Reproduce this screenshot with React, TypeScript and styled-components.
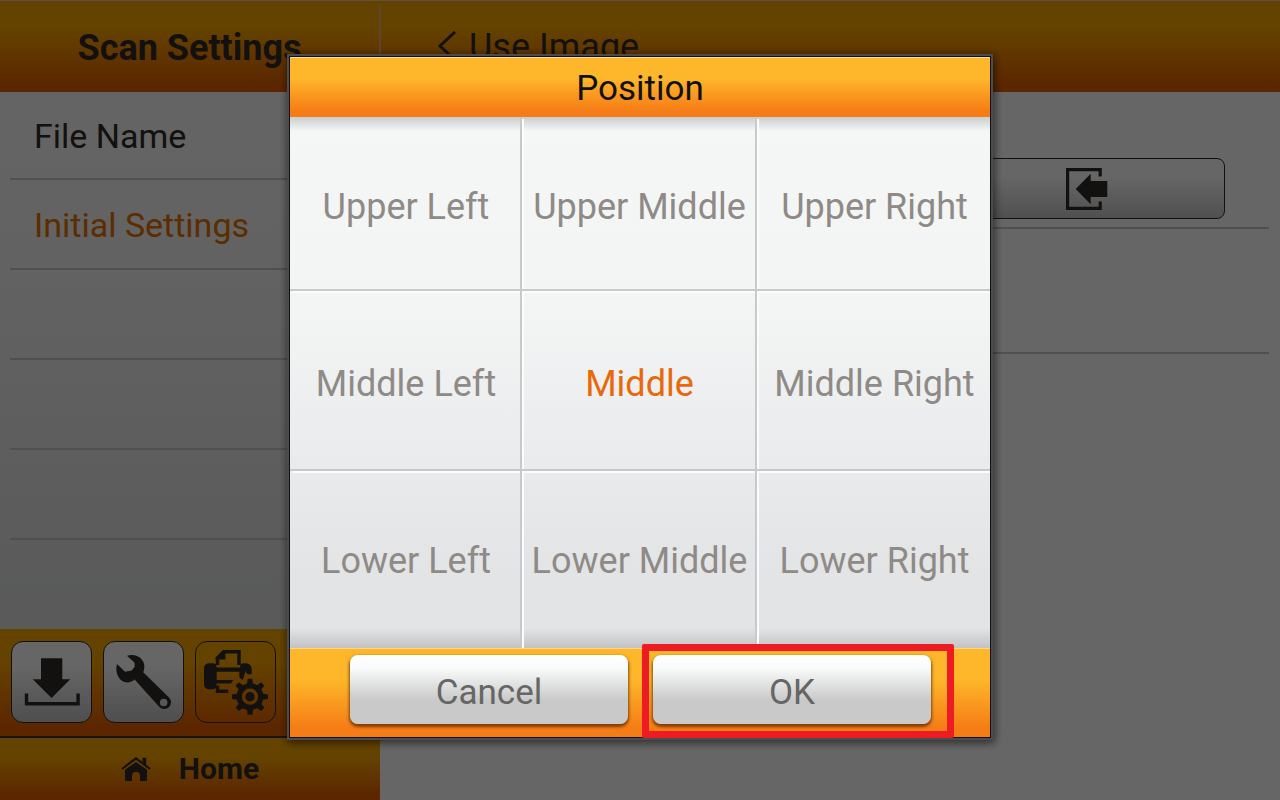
import React, { useState } from "react";
import styled, { createGlobalStyle } from "styled-components";

const GlobalStyle = createGlobalStyle`
  *, *::before, *::after { box-sizing: border-box; }
  body {
    margin: 0;
    background: #fff;
    color: #302c28;
    font-family: Roboto, "Liberation Sans", sans-serif;
  }
  button { font: inherit; color: inherit; margin: 0; }
`;

const barGradient = "linear-gradient(#fba600 0%, #fba600 30%, #e66000 92%, #e66000 100%)";
const brightGradient = "linear-gradient(#feb62a 0%, #feb62a 35%, #f57c16 90%, #f57c16 100%)";

const Page = styled.div`
  display: flex;
  flex-direction: column;
  min-height: 100vh;
`;

const Header = styled.header`
  display: flex;
  height: 92px;
  padding-top: 3px;
  border-top: 1px solid #e6cba0;
  background: ${barGradient};
`;

const ScreenTitle = styled.h1`
  flex: 0 0 381px;
  margin: 0;
  border-right: 2px solid #e6b080;
  font-size: 36px;
  font-weight: 700;
  line-height: 88px;
  text-align: center;
`;

const BackButton = styled.button`
  display: flex;
  align-items: center;
  gap: 12px;
  padding: 0 0 2px 56px;
  border: 0;
  background: none;
  font-size: 36px;
`;

const Body = styled.div`
  display: flex;
  flex: 1;
`;

const Sidebar = styled.nav`
  display: flex;
  flex: 0 0 380px;
  flex-direction: column;
`;

const MenuList = styled.ul`
  flex: 1;
  margin: 0;
  padding: 0;
  list-style: none;
  background: linear-gradient(#fbfbfb 0%, #f6f6f6 30%, #dfe0e0 100%);
`;

const MenuItem = styled.li<{ $first?: boolean }>`
  height: ${(p) => (p.$first ? 88 : 90)}px;
  margin-left: 10px;
  border-bottom: 2px solid #c8c8c8;
  &:last-child { border-bottom: 0; height: 89px; }
`;

const MenuButton = styled.button<{ $active?: boolean }>`
  display: block;
  width: 100%;
  height: 100%;
  padding: 2px 24px 0;
  border: 0;
  background: none;
  color: ${(p) => (p.$active ? "#e47100" : "#302c28")};
  font-size: 34px;
  text-align: left;
`;

const Toolbar = styled.div`
  display: flex;
  gap: 11px;
  height: 109px;
  padding: 12px 11px;
  border-bottom: 2px solid #47301c;
  background: ${barGradient};
`;

const ToolButton = styled.button<{ $selected?: boolean }>`
  width: 81px;
  height: 82px;
  padding: 0;
  border: 1px solid #302c28;
  border-radius: 12px;
  background: ${(p) =>
    p.$selected ? "transparent" : "linear-gradient(#fff 0%, #fff 30%, #c4c4c4 100%)"};
  svg { display: block; }
`;

const HomeButton = styled.button`
  display: flex;
  align-items: center;
  justify-content: center;
  gap: 28px;
  height: 62px;
  padding: 0 0 2px;
  border: 0;
  border-top: 1px solid #d8a860;
  background: ${barGradient};
  font-size: 30px;
  font-weight: 700;
`;

const Content = styled.main`
  flex: 1;
  padding: 1px 11px 0 10px;
`;

const SettingRow = styled.div<{ $height: number }>`
  display: flex;
  align-items: flex-end;
  justify-content: flex-end;
  height: ${(p) => p.$height}px;
  padding: 0 44px 8px;
  border-bottom: 2px solid #c8c8c8;
`;

const ImportButton = styled.button`
  display: grid;
  place-items: center;
  width: 276px;
  height: 61px;
  padding: 0;
  border: 1px solid #302c28;
  border-radius: 8px;
  background: linear-gradient(#fff 0%, #fff 30%, #c8c8c8 100%);
`;

const Backdrop = styled.div`
  position: fixed;
  inset: 0;
  display: flex;
  align-items: center;
  justify-content: center;
  padding-bottom: 6px;
  background: rgba(0, 0, 0, 0.6);
`;

const Dialog = styled.section`
  width: 702px;
  max-width: 100%;
  border: 1px solid #111;
  outline: 2px solid #4c4c4c;
  box-shadow: 1px 2px 8px 3px rgba(0, 0, 0, 0.55);
`;

const DialogTitle = styled.h2`
  margin: 0;
  padding-top: 2px;
  border-top: 1px solid #ffd9a0;
  background: ${brightGradient};
  color: #111;
  font-size: 35px;
  font-weight: 400;
  line-height: 57px;
  text-align: center;
`;

const PositionGrid = styled.div`
  display: grid;
  grid-template-columns: 232fr 235fr 233fr;
  grid-template-rows: 174px 180px 177px;
  background:
    linear-gradient(rgba(90, 90, 100, 0.28), rgba(90, 90, 100, 0)) top / 100% 14px no-repeat,
    linear-gradient(rgba(120, 120, 120, 0), rgba(120, 120, 120, 0.3)) bottom / 100% 20px no-repeat,
    linear-gradient(#f5f7f7 0%, #f3f5f5 35%, #e3e4e6 85%, #e3e4e6 100%);
`;

const PositionCell = styled.button<{ $selected: boolean }>`
  padding: 8px 0 0 2px;
  border: solid #c8c9c9;
  border-width: 0 2px 2px 0;
  box-shadow: 2px 2px 0 #fbfcfc;
  background: none;
  color: ${(p) => (p.$selected ? "#e8690b" : "#8f8a86")};
  font-size: 36px;
  white-space: nowrap;
  &:nth-child(3n) { border-right: 0; box-shadow: 0 2px 0 #fbfcfc; }
  &:nth-child(n + 7) { padding-top: 2px; border-bottom: 0; box-shadow: 2px 0 0 #fbfcfc; }
  &:last-child { box-shadow: none; }
`;

const DialogFooter = styled.div`
  display: flex;
  gap: 25px;
  height: 89px;
  padding: 6px 59px 13px 60px;
  border-top: 1px solid #ffd48a;
  background: ${brightGradient};
`;

const ActionSlot = styled.div`
  position: relative;
  display: flex;
  flex: 1;
`;

const ActionButton = styled.button`
  flex: 1;
  padding: 6px 0 0;
  border: 0;
  border-radius: 8px;
  background: linear-gradient(#fff 0%, #fafbfb 18%, #c9c9c9 66%, #c9c9c9 100%);
  box-shadow: 0 2px 3px 1px rgba(90, 40, 0, 0.75);
  color: #666;
  font-size: 35px;
`;

const Highlight = styled.span`
  position: absolute;
  inset: -11px -23px -14px -11px;
  border: 7px solid #ed1c24;
  border-radius: 2px;
  pointer-events: none;
`;

const ink = "#302c28";

function ChevronIcon() {
  return (
    <svg width="20" height="32" viewBox="0 0 20 32" aria-hidden="true">
      <path d="M18 1 3 15l15 14" fill="none" stroke={ink} strokeWidth="3" />
    </svg>
  );
}

function DownloadIcon() {
  return (
    <svg width="79" height="80" viewBox="1 1 79 80" aria-hidden="true">
      <path d="M30 17.3h21.3v21h8L40.6 57 21.7 38.3H30z" fill={ink} />
      <path d="M15.5 52.5v10.2h51.6V52.5" fill="none" stroke={ink} strokeWidth="3.4" />
    </svg>
  );
}

function WrenchIcon() {
  return (
    <svg width="79" height="80" viewBox="1 1 79 80" aria-hidden="true">
      <path
        fillRule="evenodd"
        fill={ink}
        d="M24 14.700C28 13.400 33 13.800 36 16c5 3.200 6.800 9.300 4.200 15.200L66 56.400a6.700 6.700 0 0 1-9.600 9.700L31.600 38.600c-3 3-8.800 3.900-12.300 1.400C14 36.200 12.200 29.500 14 23l8 7.700 6.700-1.200 3-3.700-.3-4.300zM60.700 57.700a3.800 3.800 0 1 0 0 7.600 3.800 3.800 0 0 0 0-7.600z"
      />
    </svg>
  );
}

function PrinterGearIcon() {
  const teeth = [0, 45, 90, 135, 180, 225, 270, 315];
  return (
    <svg width="79" height="80" viewBox="1 1 79 80" aria-hidden="true">
      <path d="M22.500 24v-7L29 10.700h15V24" fill="none" stroke={ink} strokeWidth="3.500" />
      <path d="M20.700 16.500 28 9h2.500v9.500h-9.800z" fill={ink} />
      <path
        d="M13 22.300h5q3.500 0 3.700 4.200H45q.2-4.200 3.500-4.200h3q5.200 1 5.200 6v4.500q-3 1.500-5-.3l-1-2.500-3 9-3.400-2.500v-5.800H21.700V39h16.600L36 42.500H21.700q0 5.800-4 5.800H13q-4-1-4-5V27q.3-3.700 4-4.700z"
        fill={ink}
      />
      <path d="M22.500 44.500v5.800h10.800" fill="none" stroke={ink} strokeWidth="3.500" />
      <circle cx="55" cy="55.700" r="10.800" fill="none" stroke={ink} strokeWidth="5.400" />
      <circle cx="55" cy="55.700" r="4.700" fill={ink} />
      {teeth.map((angle) => (
        <path
          key={angle}
          d="M51.800 44.500 52.700 37.700h4.600l.9 6.800z"
          fill={ink}
          transform={`rotate(${angle} 55 55.700)`}
        />
      ))}
    </svg>
  );
}

function HomeIcon() {
  return (
    <svg width="30" height="24" viewBox="0 0 30 24" aria-hidden="true">
      <path d="M1 12 15 1.300 29 12" fill="none" stroke={ink} strokeWidth="2.200" />
      <path d="M21.500.8h3.700v8.500l-3.700-3zM4 12.800 15 5l11 7.800V24h-7v-5q0-4-4-4t-4 4v5H4z" fill={ink} />
    </svg>
  );
}

function ImportIcon() {
  return (
    <svg width="42" height="42" viewBox="0 0 42 42" aria-hidden="true">
      <path d="M34.200 8.500V1.600H1.600v38.800h32.600v-6.900" fill="none" stroke={ink} strokeWidth="3.200" />
      <path d="M9.700 21 24.700 5.700V13h16.600v16H24.700v7.300z" fill={ink} />
    </svg>
  );
}

const positions = [
  "Upper Left", "Upper Middle", "Upper Right",
  "Middle Left", "Middle", "Middle Right",
  "Lower Left", "Lower Middle", "Lower Right",
];

export default function App() {
  const [position, setPosition] = useState("Middle");

  return (
    <>
      <GlobalStyle />
      <Page>
        <Header>
          <ScreenTitle>Scan Settings</ScreenTitle>
          <BackButton type="button">
            <ChevronIcon />
            Use Image
          </BackButton>
        </Header>
        <Body>
          <Sidebar>
            <MenuList>
              <MenuItem $first>
                <MenuButton type="button">File Name</MenuButton>
              </MenuItem>
              <MenuItem>
                <MenuButton type="button" $active>Initial Settings</MenuButton>
              </MenuItem>
              <MenuItem />
              <MenuItem />
              <MenuItem />
              <MenuItem />
            </MenuList>
            <Toolbar>
              <ToolButton type="button" aria-label="Save"><DownloadIcon /></ToolButton>
              <ToolButton type="button" aria-label="Tools"><WrenchIcon /></ToolButton>
              <ToolButton type="button" aria-label="Device settings" $selected>
                <PrinterGearIcon />
              </ToolButton>
            </Toolbar>
            <HomeButton type="button">
              <HomeIcon />
              Home
            </HomeButton>
          </Sidebar>
          <Content>
            <SettingRow $height={136}>
              <ImportButton type="button" aria-label="Import"><ImportIcon /></ImportButton>
            </SettingRow>
            <SettingRow $height={125} />
          </Content>
        </Body>
      </Page>
      <Backdrop>
        <Dialog role="dialog" aria-modal="true" aria-labelledby="dialog-title">
          <DialogTitle id="dialog-title">Position</DialogTitle>
          <PositionGrid>
            {positions.map((name) => (
              <PositionCell
                key={name}
                type="button"
                $selected={name === position}
                aria-pressed={name === position}
                onClick={() => setPosition(name)}
              >
                {name}
              </PositionCell>
            ))}
          </PositionGrid>
          <DialogFooter>
            <ActionSlot>
              <ActionButton type="button">Cancel</ActionButton>
            </ActionSlot>
            <ActionSlot>
              <ActionButton type="button">OK</ActionButton>
              <Highlight />
            </ActionSlot>
          </DialogFooter>
        </Dialog>
      </Backdrop>
    </>
  );
}
